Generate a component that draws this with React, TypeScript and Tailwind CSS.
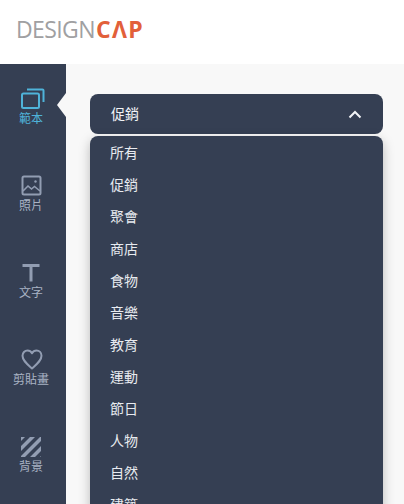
const categories = ["所有", "促銷", "聚會", "商店", "食物", "音樂", "教育", "運動", "節日", "人物", "自然", "建築"];

const cjk = "font-['Liberation_Sans','Noto_Sans_CJK_TC',sans-serif]";

function TemplateIcon() {
  return (
    <svg className="ml-[3px]" width="24" height="21" viewBox="0 0 24 21" fill="none" stroke="#4fb3d9" strokeWidth="2">
      <rect x="1" y="5.5" width="17" height="14.5" rx="1.5" />
      <path d="M6 1.5h15.5a1 1 0 0 1 1 1V14" />
    </svg>
  );
}

function PhotoIcon() {
  return (
    <svg width="21" height="21" viewBox="0 0 21 21" fill="none" stroke="#929db2" strokeWidth="2">
      <rect x="1.5" y="1.5" width="18" height="18" rx="1.5" />
      <path d="M2 16l5-5 3.5 3 3-2.5 5.5 4.5" strokeWidth="1.6" />
      <circle cx="14.5" cy="6.5" r="1.2" fill="#929db2" stroke="none" />
    </svg>
  );
}

function TextIcon() {
  return (
    <svg width="18" height="19" viewBox="0 0 18 19" fill="#929db2">
      <path d="M0.5 1h17v3h-7v14.5h-3V4h-7z" />
    </svg>
  );
}

function HeartIcon() {
  return (
    <svg className="ml-[2px]" width="22" height="21" viewBox="0 0 22 21" fill="none" stroke="#929db2" strokeWidth="2" strokeLinejoin="round">
      <path d="M11 19.5C6 15 1.5 11.5 1.5 6.8 1.5 3.7 3.8 1.5 6.5 1.5c1.9 0 3.5 1 4.5 2.8 1-1.8 2.6-2.8 4.5-2.8 2.7 0 5 2.2 5 5.3 0 4.7-4.5 8.2-9.5 12.7z" />
    </svg>
  );
}

function BackgroundIcon() {
  return (
    <svg width="20" height="20" viewBox="0 0 20 20" fill="#929db2">
      <path d="M0 0h4L0 4zM9 0h5L0 14V9zM19 0h1v4L4 20H0v-1zM20 9v5l-6 6H9zM20 19v1h-1z" />
    </svg>
  );
}

function NavItem({ icon, label, active }: { icon: React.ReactNode; label: string; active?: boolean }) {
  return (
    <div className="flex flex-col items-center mb-[49px]">
      <div className="h-[21px] flex items-center justify-center">{icon}</div>
      <span className={`mt-[3px] text-xs leading-[14px] ${active ? "text-[#4fb3d9]" : "text-[#a9b3c4]"}`}>{label}</span>
    </div>
  );
}

function Chevron() {
  return (
    <svg width="14" height="9" viewBox="0 0 14 9" fill="none" stroke="#f2f4f7" strokeWidth="2">
      <path d="M1.5 7.5L7 2l5.5 5.5" />
    </svg>
  );
}

export default function App() {
  return (
    <div className={`h-[504px] w-[404px] overflow-hidden flex flex-col bg-white ${cjk}`}>
      <header className="h-16 shrink-0 bg-white flex items-center pl-4 pb-[5px]">
        <span className="text-[23px] leading-none font-['Open_Sans',sans-serif] tracking-[-0.6px] text-[#a0a0a2]">DESIGN</span>
        <span className="text-[23px] leading-none font-['Open_Sans',sans-serif] tracking-[1.3px] font-bold text-[#e2603a] ml-[1px]">CΛP</span>
      </header>

      <div className="flex-1 flex min-h-0">
        <nav className="w-[66px] shrink-0 bg-[#353f53] flex flex-col pt-[24px] pr-1 relative">
          <NavItem icon={<TemplateIcon />} label="範本" active />
          <NavItem icon={<PhotoIcon />} label="照片" />
          <NavItem icon={<TextIcon />} label="文字" />
          <NavItem icon={<HeartIcon />} label="剪貼畫" />
          <NavItem icon={<BackgroundIcon />} label="背景" />
          <span className="absolute right-0 top-[29px] w-0 h-0 border-y-[12px] border-y-transparent border-r-[9px] border-r-[#f8f8f8]" />
        </nav>

        <main className="flex-1 min-w-0 bg-[#f8f8f8] pt-[30px] pl-6 pr-[21px]">
          <div className="h-10 rounded-lg bg-[#353f53] flex items-center justify-between pl-[21px] pr-[21px] text-sm text-[#f2f4f7]">
            <span>促銷</span>
            <Chevron />
          </div>
          <ul className="mt-[2px] rounded-lg bg-[#353f53] pt-[1px] shadow-[0_4px_12px_rgba(0,0,0,0.25)] text-sm text-[#e8ebf0]">
            {categories.map((name) => (
              <li key={name} className="h-8 flex items-center pl-5 leading-none">
                {name}
              </li>
            ))}
          </ul>
        </main>
      </div>
    </div>
  );
}
